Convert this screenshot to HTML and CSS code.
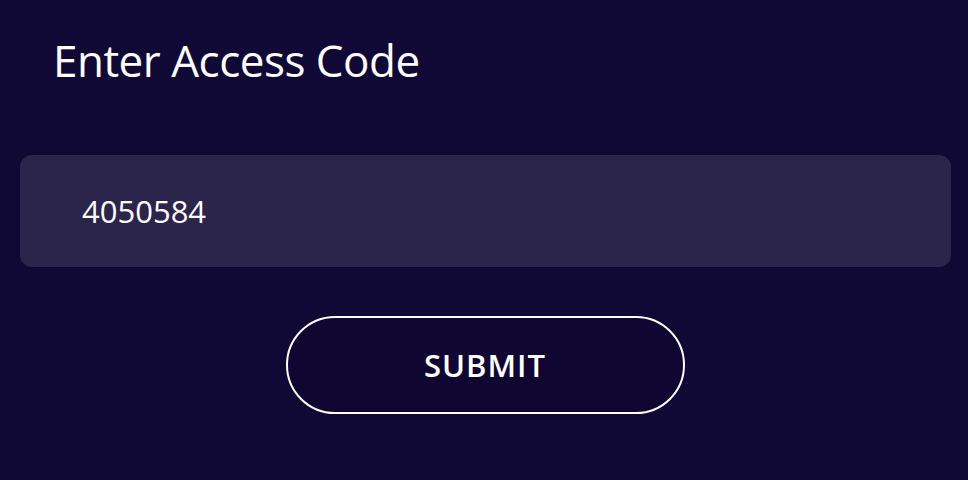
FILE: index.html
```html
<!DOCTYPE html>
<html>
<head>
<meta charset="utf-8">
<link rel="stylesheet" href="styles.css">
</head>
<body>
<main class="page">
  <h1 class="title">Enter Access Code</h1>
  <div class="field">
    <span class="value">4050584</span>
  </div>
  <div class="actions">
    <button class="submit" type="button">SUBMIT</button>
  </div>
</main>
</body>
</html>
```
FILE: styles.css
```css
html, body {
  margin: 0;
  padding: 0;
  background: #110935;
  height: 100%;
}
.page {
  font-family: "Open Sans", "Noto Sans", sans-serif;
  color: #ffffff;
  padding: 28px 17px 0 20px;
  display: flex;
  flex-direction: column;
}
.title {
  margin: 0 0 0 33px;
  font-weight: 400;
  font-size: 44px;
  line-height: 64px;
  letter-spacing: -0.5px;
}
.field {
  margin-top: 63px;
  height: 112px;
  background: #2c254b;
  border-radius: 12px;
  display: flex;
  align-items: center;
  padding-left: 62px;
}
.value {
  font-size: 31px;
  line-height: 40px;
}
.actions {
  display: flex;
  justify-content: center;
  margin-top: 49px;
  padding-right: 1px;
}
.submit {
  width: 399px;
  height: 98px;
  border: 2px solid #ffffff;
  border-radius: 49px;
  background: #0f0732;
  color: #ffffff;
  font-family: "Open Sans", "Noto Sans", sans-serif;
  font-size: 31px;
  font-weight: 600;
  letter-spacing: 1px;
  padding: 0;
}
```
